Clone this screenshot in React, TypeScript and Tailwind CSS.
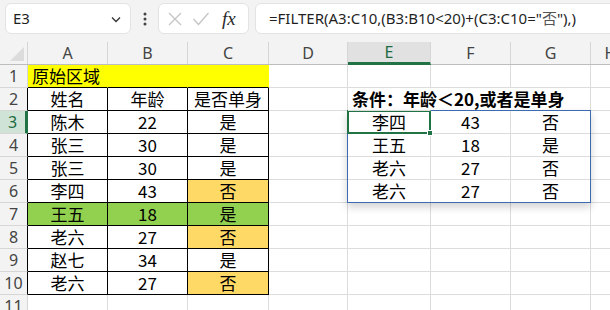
import React from 'react';

type Cell = {
  t?: string;
  left?: boolean;
  bold?: boolean;
  fill?: string;
  r?: string;
  b?: string;
};

const COLS = [80, 80, 81, 79, 83, 80, 80, 40];
const LETTERS = ['A', 'B', 'C', 'D', 'E', 'F', 'G', 'H'];

const YELLOW = 'bg-[#ffff00]';
const ORANGE = 'bg-[#ffd966]';
const GREEN = 'bg-[#92d050]';

const source: [string, string, string][] = [
  ['陈木', '22', '是'],
  ['张三', '30', '是'],
  ['张三', '30', '是'],
  ['李四', '43', '否'],
  ['王五', '18', '是'],
  ['老六', '27', '否'],
  ['赵七', '34', '是'],
  ['老六', '27', '否'],
];

const result: [string, string, string][] = [
  ['李四', '43', '否'],
  ['王五', '18', '是'],
  ['老六', '27', '否'],
  ['老六', '27', '否'],
];

function buildRows(): Cell[][] {
  const rows: Cell[][] = [];
  const blank = (): Cell => ({});

  // row 1
  rows.push([
    { t: '原始区域', left: true, fill: YELLOW, r: 'border-r-[#ffff00]', b: 'border-b-black' },
    { fill: YELLOW, r: 'border-r-[#ffff00]', b: 'border-b-black' },
    { fill: YELLOW, r: 'border-r-[#ffff00]', b: 'border-b-black' },
    blank(), blank(), blank(), blank(), blank(),
  ]);

  // row 2
  rows.push([
    { t: '姓名', r: 'border-r-black', b: 'border-b-black' },
    { t: '年龄', r: 'border-r-black', b: 'border-b-black' },
    { t: '是否单身', r: 'border-r-black', b: 'border-b-black' },
    blank(),
    { t: '条件：年龄＜20,或者是单身', left: true, bold: true, r: 'border-r-transparent' },
    { r: 'border-r-transparent' },
    blank(),
    blank(),
  ]);

  source.forEach((s, i) => {
    const green = i === 4;
    const cFill = green ? GREEN : s[2] === '否' ? ORANGE : undefined;
    const row: Cell[] = [
      { t: s[0], fill: green ? GREEN : undefined, r: 'border-r-black', b: 'border-b-black' },
      { t: s[1], fill: green ? GREEN : undefined, r: 'border-r-black', b: 'border-b-black' },
      { t: s[2], fill: cFill, r: 'border-r-black', b: 'border-b-black' },
      blank(),
    ];
    const res = result[i];
    if (res) {
      row.push({ t: res[0] }, { t: res[1] }, { t: res[2] });
    } else {
      row.push(blank(), blank(), blank());
    }
    row.push(blank());
    rows.push(row);
  });

  rows.push([blank(), blank(), blank(), blank(), blank(), blank(), blank(), blank()]);
  return rows;
}

const rows = buildRows();

const NameBox = () => (
  <div className="ml-[5px] shrink-0 w-[126px] h-[31px] bg-white border border-[#e3e3e3] rounded-[6px] flex items-center justify-between pl-[7px] pr-[8px]">
    <span className="text-[15px] text-[#1f1f1f] font-['Noto_Sans',sans-serif]">E3</span>
    <svg width="12" height="12" viewBox="0 0 12 12">
      <path d="M2 4.5 L6 8.5 L10 4.5" fill="none" stroke="#333" strokeWidth="1.3" />
    </svg>
  </div>
);

const FxBox = () => (
  <div className="shrink-0 w-[91px] h-[31px] bg-white border border-[#e3e3e3] rounded-[6px] flex items-center pl-[8px]">
    <svg width="16" height="16" viewBox="0 0 16 16">
      <path d="M2 2 L14 14 M14 2 L2 14" stroke="#c4c4c4" strokeWidth="1.3" fill="none" />
    </svg>
    <svg width="18" height="16" viewBox="0 0 18 16" className="ml-[9px]">
      <path d="M1.5 8 L6.5 13.5 L16.5 2" stroke="#c4c4c4" strokeWidth="1.3" fill="none" />
    </svg>
    <span className="ml-[12px] text-[19px] italic font-['Liberation_Serif',serif] text-[#2a2a2a] leading-none">fx</span>
  </div>
);

export default function App() {
  return (
    <div className="w-[610px] h-[310px] overflow-hidden bg-white font-['Noto_Sans_CJK_SC',sans-serif] text-black">
      {/* formula bar */}
      <div className="h-[42px] bg-[#f3f3f3] flex items-start pt-[3px] overflow-hidden">
        <NameBox />
        <div className="shrink-0 w-[27px] h-[31px] flex items-center justify-center">
          <svg width="4" height="14" viewBox="0 0 4 14">
            <circle cx="2" cy="2" r="1.5" fill="#444" />
            <circle cx="2" cy="7" r="1.5" fill="#444" />
            <circle cx="2" cy="12" r="1.5" fill="#444" />
          </svg>
        </div>
        <FxBox />
        <div className="ml-[6px] w-[420px] shrink-0 h-[31px] bg-white border border-[#e3e3e3] rounded-[6px] flex items-center pl-[13px]">
          <span className="text-[15px] text-[#1f1f1f] font-['Noto_Sans',sans-serif] whitespace-nowrap">
            =FILTER(A3:C10,(B3:B10&lt;20)+(C3:C10="<span className="font-['Noto_Sans_CJK_SC'] text-[#555]">否</span>"),)
          </span>
        </div>
      </div>

      {/* column headers */}
      <div className="flex h-[23px] bg-[#f3f3f3] border-b border-[#bdbdbd]">
        <div className="w-[28px] shrink-0 border-r border-[#d6d6d6] flex items-end justify-end pr-[3px] pb-[3px]">
          <svg width="14" height="14" viewBox="0 0 14 14">
            <path d="M14 0 L14 14 L0 14 Z" fill="#dcdcdc" />
          </svg>
        </div>
        {COLS.map((w, i) => (
          <div
            key={i}
            style={{ width: w }}
            className={`shrink-0 flex items-center justify-center text-[16px] font-['Noto_Sans',sans-serif] border-r border-[#d6d6d6] ${
              i === 4 ? 'bg-[#e1e1e1] text-[#1e6b41] border-b-[3px] border-b-[#217346] -mb-px' : 'text-[#444]'
            }`}
          >
            {LETTERS[i]}
          </div>
        ))}
      </div>

      {/* grid */}
      <div className="relative">
        {rows.map((row, ri) => (
          <div key={ri} className="flex h-[23px]">
            <div
              className={`w-[28px] shrink-0 flex items-center justify-center text-[16px] font-['Noto_Sans',sans-serif] border-b border-b-[#d6d6d6] border-r ${
                ri === 2
                  ? 'bg-[#cfe3d6] text-[#1e6b41] border-r-[3px] border-r-[#217346]'
                  : 'bg-[#f3f3f3] text-[#444]'
              } ${ri >= 1 && ri <= 9 && ri !== 2 ? 'border-r-black' : ri !== 2 ? 'border-r-[#d6d6d6]' : ''}`}
            >
              {ri + 1}
            </div>
            {row.map((c, ci) => (
              <div
                key={ci}
                style={{ width: COLS[ci] }}
                className={`shrink-0 flex items-center border-r border-b whitespace-nowrap ${c.r ?? 'border-r-[#dcdcdc]'} ${
                  c.b ?? 'border-b-[#dcdcdc]'
                } ${c.fill ?? ''} ${c.left ? 'justify-start pl-[4px] overflow-visible relative z-10' : 'justify-center'} ${
                  c.bold ? 'font-bold' : ''
                } text-[17px] leading-[22px]`}
              >
                {c.t}
              </div>
            ))}
          </div>
        ))}

        {/* spill range */}
        <div className="absolute left-[347px] top-[45px] w-[244px] h-[93px] border border-[#3d6bb3] shadow-[0_4px_8px_rgba(0,0,0,0.18)] pointer-events-none" />
        {/* active cell */}
        <div className="absolute left-[347px] top-[45px] w-[84px] h-[24px] border-2 border-[#217346] pointer-events-none">
          <div className="absolute -right-[4px] -bottom-[4px] w-[6px] h-[6px] bg-[#217346] border border-white" />
        </div>
      </div>
    </div>
  );
}
